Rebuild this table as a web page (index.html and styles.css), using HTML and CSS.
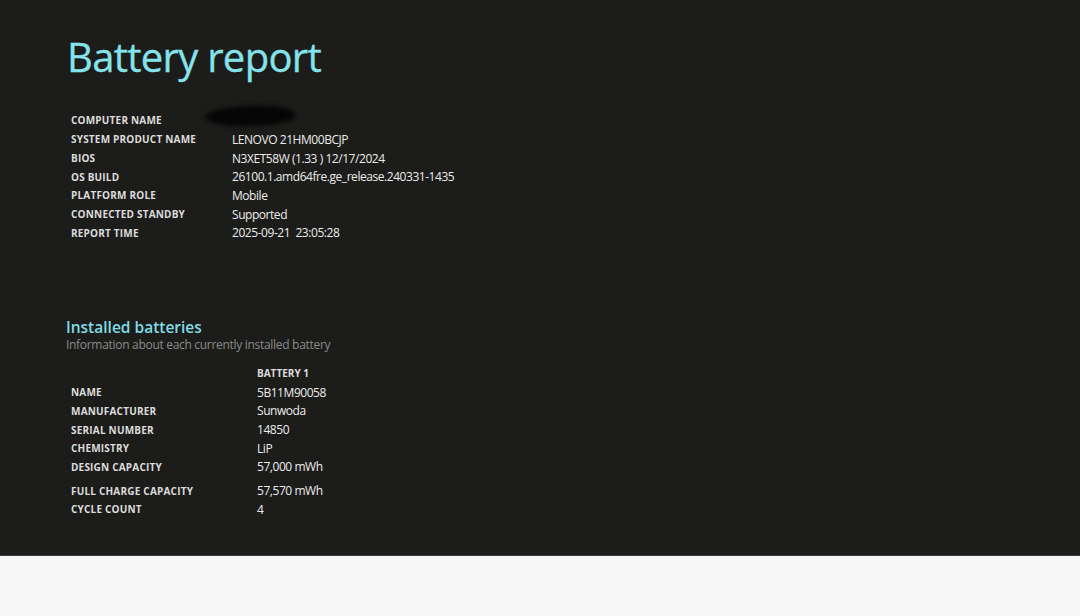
FILE: index.html
```html
<!DOCTYPE html>
<html lang="en">
  <head>
    <meta charset="UTF-8" />
    <meta name="viewport" content="width=device-width, initial-scale=1.0" />
    <title>Battery report</title>
    <link rel="stylesheet" href="styles.css">
  </head>
  <body>
    <div class="report">
      <h1>Battery report</h1>
      <table class="info">
        <tr><td class="label">COMPUTER NAME</td><td class="value"><span class="redacted"></span></td></tr>
        <tr><td class="label">SYSTEM PRODUCT NAME</td><td class="value">LENOVO 21HM00BCJP</td></tr>
        <tr><td class="label">BIOS</td><td class="value">N3XET58W (1.33 ) 12/17/2024</td></tr>
        <tr><td class="label">OS BUILD</td><td class="value">26100.1.amd64fre.ge_release.240331-1435</td></tr>
        <tr><td class="label">PLATFORM ROLE</td><td class="value">Mobile</td></tr>
        <tr><td class="label">CONNECTED STANDBY</td><td class="value">Supported</td></tr>
        <tr><td class="label">REPORT TIME</td><td class="value">2025-09-21&nbsp; 23:05:28</td></tr>
      </table>

      <h2>Installed batteries</h2>
      <p class="explanation">Information about each currently installed battery</p>

      <table class="batteries">
        <tr><td class="label"></td><td class="head">BATTERY 1</td></tr>
        <tr><td class="label">NAME</td><td class="value">5B11M90058</td></tr>
        <tr><td class="label">MANUFACTURER</td><td class="value">Sunwoda</td></tr>
        <tr><td class="label">SERIAL NUMBER</td><td class="value">14850</td></tr>
        <tr><td class="label">CHEMISTRY</td><td class="value">LiP</td></tr>
        <tr class="spaced"><td class="label">DESIGN CAPACITY</td><td class="value">57,000 mWh</td></tr>
        <tr><td class="label">FULL CHARGE CAPACITY</td><td class="value">57,570 mWh</td></tr>
        <tr><td class="label">CYCLE COUNT</td><td class="value">4</td></tr>
      </table>
    </div>
  </body>
</html>
```

FILE: styles.css
```css
body {
  margin: 0;
  background-color: #f7f7f7;
  font-family: "Open Sans", "Noto Sans", sans-serif;
}
.report {
  height: 556px;
  box-sizing: border-box;
  background-color: #1c1c1a;
  border-bottom: 1px solid #3a3a38;
  padding: 29px 0 0 67px;
  color: #e6e6e6;
}
h1 {
  margin: 0;
  font-size: 40px;
  font-weight: 400;
  letter-spacing: -0.7px;
  color: #85e3ec;
  line-height: 56px;
  -webkit-text-stroke: 0.3px #85e3ec;
}
table {
  border-collapse: collapse;
}
td {
  padding: 0;
  height: 18.7px;
  vertical-align: middle;
}
.label {
  font-size: 10px;
  font-weight: 700;
  letter-spacing: 0.2px;
  color: #dcdcdc;
  padding-left: 4px;
}
.value {
  font-size: 12px;
  color: #ececec;
  letter-spacing: -0.45px;
}
.info {
  margin-top: 25px;
}
.info .label {
  width: 161px;
}
.redacted {
  display: inline-block;
  width: 90px;
  height: 20px;
  margin-left: -27px;
  background: #050505;
  border-radius: 45% 55% 40% 60%;
  filter: blur(2.5px);
  vertical-align: middle;
  transform: translateY(-4px) rotate(-3deg);
}
h2 {
  margin: 75px 0 0 -1px;
  font-size: 15.5px;
  font-weight: 600;
  color: #7fdde6;
  line-height: 20px;
}
.explanation {
  margin: 0 0 0 -1px;
  font-size: 12px;
  color: #8a8a8a;
  line-height: 16px;
  letter-spacing: -0.3px;
}
.batteries {
  margin-top: 11px;
}
.batteries .label {
  width: 186px;
}
.head {
  font-size: 10px;
  font-weight: 700;
  letter-spacing: 0;
  color: #dcdcdc;
}
.spaced td {
  padding-bottom: 5px;
}
```
